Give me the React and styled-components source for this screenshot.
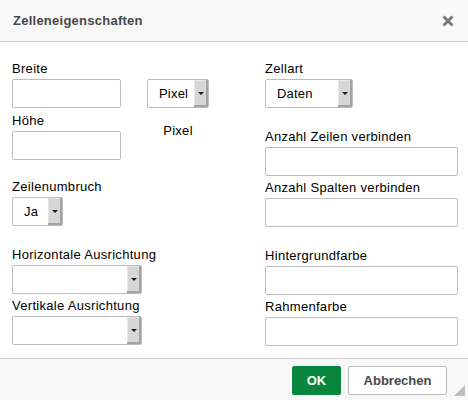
import React from 'react';
import styled, { createGlobalStyle } from 'styled-components';

const GlobalStyle = createGlobalStyle`
    html, body {
        margin: 0;
        padding: 0;
        background: #ffffff;
    }
    body {
        font-family: "Liberation Sans", Arial, sans-serif;
        font-size: 13px;
        color: #000000;
    }
`;

const Dialog = styled.div`
    width: 468px;
    height: 400px;
    display: flex;
    flex-direction: column;
    background: #ffffff;
    box-sizing: border-box;
`;

const TitleBar = styled.div`
    height: 41px;
    flex: none;
    display: flex;
    align-items: center;
    justify-content: space-between;
    padding: 0 13px 0 13px;
    background: #f8f8f8;
    border-bottom: 1px solid #d1d1d1;
`;

const Title = styled.div`
    font-weight: bold;
    font-size: 13px;
    color: #484848;
    letter-spacing: 0.25px;
`;

const Close = styled.div`
    width: 14px;
    height: 14px;
    display: flex;
    align-items: center;
    justify-content: center;
    margin-top: 1px;
`;

const Body = styled.div`
    flex: 1;
    display: grid;
    grid-template-columns: 253px 193px;
    padding: 19px 10px 0 12px;
`;

const Column = styled.div`
    display: flex;
    flex-direction: column;
`;

const Field = styled.div`
    display: flex;
    flex-direction: column;
    margin-top: ${(p) => p.$top || 0}px;
`;

const Label = styled.label`
    display: block;
    height: 16px;
    line-height: 16px;
    margin-bottom: 2px;
    white-space: nowrap;
    letter-spacing: 0.3px;
`;

const TextBox = styled.div`
    width: ${(p) => p.$width}px;
    height: 29px;
    box-sizing: border-box;
    border: 1px solid #bcbcbc;
    border-radius: 2px;
    background: #ffffff;
`;

const SelectBox = styled.div`
    width: ${(p) => p.$width}px;
    height: 29px;
    box-sizing: border-box;
    border: 1px solid #bcbcbc;
    border-radius: 2px;
    background: #ffffff;
    display: flex;
    align-items: stretch;
`;

const SelectValue = styled.div`
    flex: 1;
    padding-left: 11px;
    line-height: 27px;
    white-space: nowrap;
    letter-spacing: 0.2px;
`;

const Arrow = styled.div`
    width: 13px;
    flex: none;
    background: #d6d6d6;
    box-shadow: inset -2px -2px 0 #a3a3a3, inset 1px 1px 0 #e6e6e6;
    display: flex;
    align-items: center;
    justify-content: center;
    padding-right: 1px;

    &::after {
        content: '';
        border-left: 3px solid transparent;
        border-right: 3px solid transparent;
        border-top: 3px solid #1a1a1a;
        margin-top: -1px;
    }
`;

const SizeRow = styled.div`
    display: flex;
    gap: 26px;
`;

const SizeFields = styled.div`
    display: flex;
    flex-direction: column;
`;

const UnitColumn = styled.div`
    width: 62px;
    padding-top: 18px;
    display: flex;
    flex-direction: column;
    align-items: center;
`;

const UnitText = styled.div`
    margin-top: 15px;
    line-height: 16px;
    letter-spacing: 0.3px;
`;

const Footer = styled.div`
    height: 42px;
    flex: none;
    box-sizing: border-box;
    border-top: 1px solid #d1d1d1;
    background: #f8f8f8;
    display: flex;
    justify-content: flex-end;
    align-items: flex-start;
    gap: 7px;
    padding: 7px 21px 0 0;
    position: relative;
`;

const Button = styled.button`
    height: 29px;
    width: ${(p) => p.$width}px;
    box-sizing: border-box;
    border-radius: 2px;
    font-family: "Liberation Sans", Arial, sans-serif;
    font-size: 13px;
    font-weight: bold;
    padding: 0;
    border: 1px solid ${(p) => (p.$primary ? '#09863e' : '#bcbcbc')};
    background: ${(p) => (p.$primary ? '#09863e' : '#ffffff')};
    color: ${(p) => (p.$primary ? '#ffffff' : '#484848')};
`;

const Grip = styled.div`
    position: absolute;
    right: 3px;
    bottom: 4px;
    width: 0;
    height: 0;
    border-left: 11px solid transparent;
    border-bottom: 11px solid #bcbcbc;
`;

const Select = ({ width, value }) => (
    <SelectBox $width={width}>
        <SelectValue>{value}</SelectValue>
        <Arrow />
    </SelectBox>
);

const App = () => {
    return (
        <Dialog>
            <GlobalStyle />
            <TitleBar>
                <Title>Zelleneigenschaften</Title>
                <Close>
                    <svg width="12" height="12" viewBox="0 0 12 12">
                        <path d="M1.5 1.5 L10.5 10.5 M10.5 1.5 L1.5 10.5" stroke="#767676" strokeWidth="2.8" strokeLinecap="butt" />
                    </svg>
                </Close>
            </TitleBar>
            <Body>
                <Column>
                    <SizeRow>
                        <SizeFields>
                            <Field>
                                <Label>Breite</Label>
                                <TextBox $width={109} />
                            </Field>
                            <Field $top={5}>
                                <Label>Höhe</Label>
                                <TextBox $width={109} />
                            </Field>
                        </SizeFields>
                        <UnitColumn>
                            <Select width={62} value="Pixel" />
                            <UnitText>Pixel</UnitText>
                        </UnitColumn>
                    </SizeRow>
                    <Field $top={19}>
                        <Label>Zeilenumbruch</Label>
                        <Select width={51} value="Ja" />
                    </Field>
                    <Field $top={21}>
                        <Label>Horizontale Ausrichtung</Label>
                        <Select width={130} value="" />
                    </Field>
                    <Field $top={4}>
                        <Label>Vertikale Ausrichtung</Label>
                        <Select width={130} value="" />
                    </Field>
                </Column>
                <Column>
                    <Field>
                        <Label>Zellart</Label>
                        <Select width={88} value="Daten" />
                    </Field>
                    <Field $top={21}>
                        <Label>Anzahl Zeilen verbinden</Label>
                        <TextBox $width={193} />
                    </Field>
                    <Field $top={4}>
                        <Label>Anzahl Spalten verbinden</Label>
                        <TextBox $width={193} />
                    </Field>
                    <Field $top={21}>
                        <Label>Hintergrundfarbe</Label>
                        <TextBox $width={193} />
                    </Field>
                    <Field $top={4}>
                        <Label>Rahmenfarbe</Label>
                        <TextBox $width={193} />
                    </Field>
                </Column>
            </Body>
            <Footer>
                <Button $primary $width={49}>OK</Button>
                <Button $width={99}>Abbrechen</Button>
                <Grip />
            </Footer>
        </Dialog>
    );
};

export default App;
